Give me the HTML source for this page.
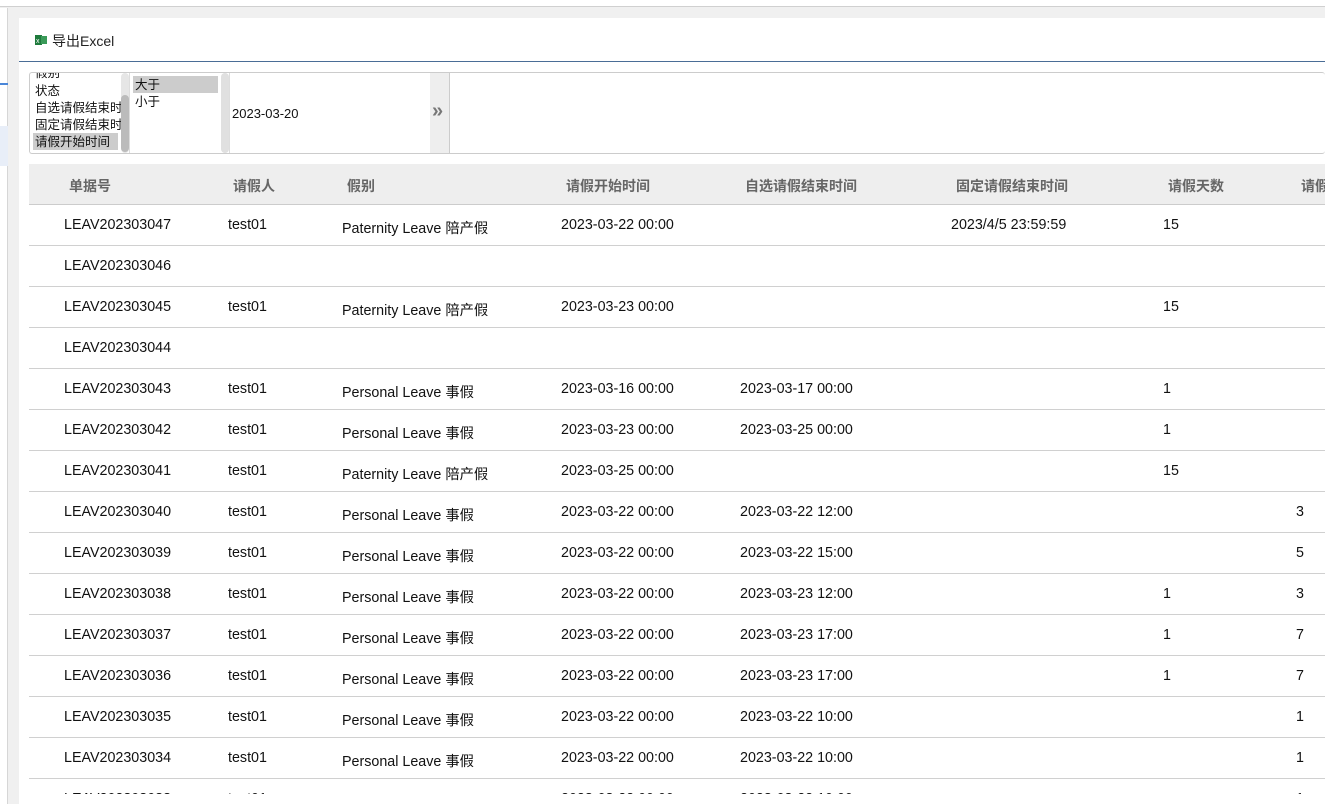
<!DOCTYPE html>
<html><head><meta charset="utf-8"><style>
*{margin:0;padding:0;box-sizing:border-box}
body{width:1325px;height:804px;overflow:hidden;background:#f0f0f0;font-family:"Liberation Sans","Noto Sans CJK SC",sans-serif;position:relative;color:#111}
.a{position:absolute;white-space:nowrap}
#top{left:0;top:0;width:1325px;height:7px;background:#fff;border-bottom:1px solid #d0d0d0}
#left{left:0;top:8px;width:8px;height:796px;background:#fff;border-right:1px solid #d6d6d6}
#panel{left:19px;top:18px;width:1306px;height:786px;background:#fff}
#tb{left:19px;top:18px;width:1306px;height:44px;border-bottom:1px solid #4a6d96}
.fl{font-size:12.5px;line-height:17px}
#tbl{left:29px;top:164px;width:1296px;height:630px;overflow:hidden}
.hd{position:absolute;left:0;top:0;width:1296px;height:41px;background:#eeeeee;border-bottom:1px solid #ccc}
.hd span{position:absolute;top:12px;font-size:14px;font-weight:bold;color:#666}
.r{position:absolute;left:0;width:1296px;height:41px;border-bottom:1px solid #d0d0d0;font-size:14.3px}
.r span{position:absolute;top:12px}
</style></head><body>
<div class="a" id="top"></div>
<div class="a" id="left"></div>
<div class="a" style="left:0;top:83px;width:8px;height:2px;background:#4a86d8"></div>
<div class="a" style="left:0;top:126px;width:8px;height:40px;background:#e8eef8"></div>
<div class="a" id="panel"></div>
<div class="a" id="tb"></div>
<svg class="a" style="left:35px;top:34px" width="12" height="12" viewBox="0 0 12 12"><rect x="0" y="1" width="7" height="10" fill="#1e7a3c"/><rect x="6" y="2" width="6" height="8" fill="#3a9a58"/><text x="1" y="9" font-size="7" fill="#fff" font-family="Liberation Sans">x</text></svg>
<div class="a" style="left:52px;top:31px;font-size:14px;color:#222">导出Excel</div>
<div class="a" style="left:29px;top:72px;width:1296px;height:82px;border:1px solid #ccc;border-radius:3px;border-right:none"></div>
<div class="a" style="left:30px;top:73px;width:100px;height:80px;overflow:hidden">
 <div class="a fl" style="left:5px;top:-8px">假别</div>
 <div class="a fl" style="left:5px;top:10px">状态</div>
 <div class="a fl" style="left:5px;top:27px">自选请假结束时间</div>
 <div class="a fl" style="left:5px;top:44px">固定请假结束时间</div>
 <div class="a" style="left:3px;top:60px;width:85px;height:17px;background:#ccc"></div>
 <div class="a fl" style="left:5px;top:61px">请假开始时间</div>
 <div class="a" style="left:91px;top:0;width:8px;height:80px;background:#e6e6e6;border-radius:4px"></div>
 <div class="a" style="left:91px;top:22px;width:8px;height:57px;background:#bbb;border-radius:4px"></div>
</div>
<div class="a" style="left:129px;top:73px;width:1px;height:80px;background:#ddd"></div>
<div class="a" style="left:133px;top:76px;width:85px;height:17px;background:#ccc"></div>
<div class="a fl" style="left:135px;top:77px">大于</div>
<div class="a fl" style="left:135px;top:94px">小于</div>
<div class="a" style="left:221px;top:73px;width:8px;height:80px;background:#e0e0e0;border-radius:4px"></div>
<div class="a" style="left:229px;top:73px;width:1px;height:80px;background:#ddd"></div>
<div class="a" style="left:232px;top:106px;font-size:13px">2023-03-20</div>
<div class="a" style="left:430px;top:73px;width:20px;height:80px;background:#eee;border-right:1px solid #ccc"></div>
<div class="a" style="left:432px;top:100px;font-size:20px;font-weight:bold;color:#777">»</div>
<div class="a" id="tbl">
<div class="hd"><span style="left:40px">单据号</span><span style="left:204px">请假人</span><span style="left:318px">假别</span><span style="left:537px">请假开始时间</span><span style="left:716px">自选请假结束时间</span><span style="left:927px">固定请假结束时间</span><span style="left:1139px">请假天数</span><span style="left:1272px">请假</span></div>
<div class="r" style="top:41px"><span style="left:35px">LEAV202303047</span><span style="left:199px">test01</span><span style="left:313px">Paternity Leave 陪产假</span><span style="left:532px">2023-03-22 00:00</span><span style="left:922px">2023/4/5 23:59:59</span><span style="left:1134px">15</span></div>
<div class="r" style="top:82px"><span style="left:35px">LEAV202303046</span></div>
<div class="r" style="top:123px"><span style="left:35px">LEAV202303045</span><span style="left:199px">test01</span><span style="left:313px">Paternity Leave 陪产假</span><span style="left:532px">2023-03-23 00:00</span><span style="left:1134px">15</span></div>
<div class="r" style="top:164px"><span style="left:35px">LEAV202303044</span></div>
<div class="r" style="top:205px"><span style="left:35px">LEAV202303043</span><span style="left:199px">test01</span><span style="left:313px">Personal Leave 事假</span><span style="left:532px">2023-03-16 00:00</span><span style="left:711px">2023-03-17 00:00</span><span style="left:1134px">1</span></div>
<div class="r" style="top:246px"><span style="left:35px">LEAV202303042</span><span style="left:199px">test01</span><span style="left:313px">Personal Leave 事假</span><span style="left:532px">2023-03-23 00:00</span><span style="left:711px">2023-03-25 00:00</span><span style="left:1134px">1</span></div>
<div class="r" style="top:287px"><span style="left:35px">LEAV202303041</span><span style="left:199px">test01</span><span style="left:313px">Paternity Leave 陪产假</span><span style="left:532px">2023-03-25 00:00</span><span style="left:1134px">15</span></div>
<div class="r" style="top:328px"><span style="left:35px">LEAV202303040</span><span style="left:199px">test01</span><span style="left:313px">Personal Leave 事假</span><span style="left:532px">2023-03-22 00:00</span><span style="left:711px">2023-03-22 12:00</span><span style="left:1267px">3</span></div>
<div class="r" style="top:369px"><span style="left:35px">LEAV202303039</span><span style="left:199px">test01</span><span style="left:313px">Personal Leave 事假</span><span style="left:532px">2023-03-22 00:00</span><span style="left:711px">2023-03-22 15:00</span><span style="left:1267px">5</span></div>
<div class="r" style="top:410px"><span style="left:35px">LEAV202303038</span><span style="left:199px">test01</span><span style="left:313px">Personal Leave 事假</span><span style="left:532px">2023-03-22 00:00</span><span style="left:711px">2023-03-23 12:00</span><span style="left:1134px">1</span><span style="left:1267px">3</span></div>
<div class="r" style="top:451px"><span style="left:35px">LEAV202303037</span><span style="left:199px">test01</span><span style="left:313px">Personal Leave 事假</span><span style="left:532px">2023-03-22 00:00</span><span style="left:711px">2023-03-23 17:00</span><span style="left:1134px">1</span><span style="left:1267px">7</span></div>
<div class="r" style="top:492px"><span style="left:35px">LEAV202303036</span><span style="left:199px">test01</span><span style="left:313px">Personal Leave 事假</span><span style="left:532px">2023-03-22 00:00</span><span style="left:711px">2023-03-23 17:00</span><span style="left:1134px">1</span><span style="left:1267px">7</span></div>
<div class="r" style="top:533px"><span style="left:35px">LEAV202303035</span><span style="left:199px">test01</span><span style="left:313px">Personal Leave 事假</span><span style="left:532px">2023-03-22 00:00</span><span style="left:711px">2023-03-22 10:00</span><span style="left:1267px">1</span></div>
<div class="r" style="top:574px"><span style="left:35px">LEAV202303034</span><span style="left:199px">test01</span><span style="left:313px">Personal Leave 事假</span><span style="left:532px">2023-03-22 00:00</span><span style="left:711px">2023-03-22 10:00</span><span style="left:1267px">1</span></div>
<div class="r" style="top:615px"><span style="left:35px">LEAV202303033</span><span style="left:199px">test01</span><span style="left:313px">Personal Leave 事假</span><span style="left:532px">2023-03-22 00:00</span><span style="left:711px">2023-03-22 10:00</span><span style="left:1267px">1</span></div>
</div>
</body></html>
